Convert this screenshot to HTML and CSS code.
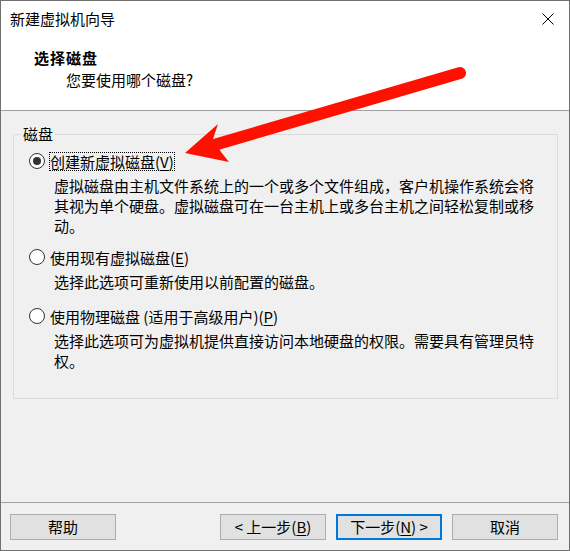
FILE: index.html
```html
<!DOCTYPE html>
<html lang="zh-CN">
<head>
<meta charset="utf-8">
<title>新建虚拟机向导</title>
<link rel="stylesheet" href="styles.css">
</head>
<body>
<div class="window">
  <div class="titlebar">
    <span class="title">新建虚拟机向导</span>
    <span class="close">
      <svg width="12" height="12" viewBox="0 0 12 12"><path d="M0.5 0.5 L11.5 11.5 M11.5 0.5 L0.5 11.5" stroke="#000" stroke-width="1" fill="none"/></svg>
    </span>
  </div>
  <div class="header">
    <div class="h-title">选择磁盘</div>
    <div class="h-sub">您要使用哪个磁盘?</div>
  </div>
  <div class="content">
    <fieldset class="group">
      <legend>磁盘</legend>
      <div class="option">
        <div class="opt-row"><span class="radio checked"></span><span class="label focus">创建新虚拟磁盘(<u>V</u>)</span></div>
        <div class="desc">虚拟磁盘由主机文件系统上的一个或多个文件组成，客户机操作系统会将其视为单个硬盘。虚拟磁盘可在一台主机上或多台主机之间轻松复制或移动。</div>
      </div>
      <div class="option opt2">
        <div class="opt-row"><span class="radio"></span><span class="label">使用现有虚拟磁盘(<u>E</u>)</span></div>
        <div class="desc">选择此选项可重新使用以前配置的磁盘。</div>
      </div>
      <div class="option opt3">
        <div class="opt-row"><span class="radio"></span><span class="label">使用物理磁盘 (适用于高级用户)(<u>P</u>)</span></div>
        <div class="desc">选择此选项可为虚拟机提供直接访问本地硬盘的权限。需要具有管理员特权。</div>
      </div>
    </fieldset>
  </div>
  <div class="footer">
    <button class="btn">帮助</button>
    <span class="spacer"></span>
    <button class="btn">&lt; 上一步(<u>B</u>)</button>
    <button class="btn default">下一步(<u>N</u>) &gt;</button>
    <button class="btn">取消</button>
  </div>
  <svg class="arrow" width="570" height="551" viewBox="0 0 570 551">
    <line x1="460" y1="73" x2="214" y2="145" stroke="#fe1100" stroke-width="12" stroke-linecap="round"/>
    <polygon points="185,153 218,124 213,139 221,152 229,162" fill="#fe1100"/>
  </svg>
</div>
</body>
</html>
```

FILE: styles.css
```css
* { box-sizing: border-box; }
html, body { margin: 0; padding: 0; }
body {
  width: 570px;
  height: 551px;
  font-family: "Noto Sans CJK SC", "Microsoft YaHei", sans-serif;
  font-size: 15px;
  color: #000;
}
.window {
  position: relative;
  width: 570px;
  height: 551px;
  border: 1px solid #707070;
  display: flex;
  flex-direction: column;
  background: #f0f0f0;
}
.titlebar {
  height: 36px;
  background: #fff;
  display: flex;
  align-items: center;
  justify-content: space-between;
  padding-left: 9px;
}
.title { line-height: 20px; }
.close {
  width: 42px;
  height: 36px;
  display: flex;
  align-items: center;
  justify-content: center;
}
.close svg { display: block; }
.header {
  background: #fff;
  border-bottom: 1px solid #a0a0a0;
  padding: 11px 0 20px 33px;
}
.h-title { font-weight: 700; line-height: 20px; letter-spacing: 1px; }
.h-sub { line-height: 20px; margin-top: 2px; padding-left: 32px; }
.content {
  flex: 1;
  padding-top: 13px;
}
.group {
  margin: 0 11px 0 12px;
  border: 1px solid #dcdcdc;
  padding: 7px 0 27px 7px;
  min-width: 0;
}
.group legend {
  padding: 0 2px;
  line-height: 20px;
}
.option { padding-left: 8px; }
.opt2 { margin-top: 11px; }
.opt3 { margin-top: 14px; }
.opt-row {
  display: flex;
  align-items: center;
  height: 20px;
}
.radio {
  width: 16px;
  height: 16px;
  border-radius: 50%;
  border: 1px solid #333;
  background: #fff;
  margin-right: 4px;
  flex: none;
  position: relative;
}
.radio.checked::after {
  content: "";
  position: absolute;
  left: 3px;
  top: 3px;
  width: 8px;
  height: 8px;
  border-radius: 50%;
  background: #333;
}
.label {
  line-height: 17px;
  border: 1px dotted transparent;
}
.label.focus { border-color: #000; }
.desc {
  margin-top: 5px;
  margin-left: 25px;
  width: 488px;
  line-height: 20px;
}
u { text-underline-offset: 2px; }
.footer {
  height: 48px;
  border-top: 1px solid #a0a0a0;
  padding: 11px 11px 10px 9px;
  display: flex;
  align-items: flex-start;
  gap: 10px;
}
.spacer { flex: 1; }
.btn {
  width: 106px;
  height: 26px;
  background: #e1e1e1;
  border: 1px solid #adadad;
  font-family: "Noto Sans CJK SC", "Microsoft YaHei", sans-serif;
  font-size: 15px;
  color: #000;
  padding: 0;
  line-height: 20px;
}
.btn.default { border: 2px solid #0078d7; }
.arrow {
  position: absolute;
  left: -1px;
  top: -1px;
  pointer-events: none;
}
```
